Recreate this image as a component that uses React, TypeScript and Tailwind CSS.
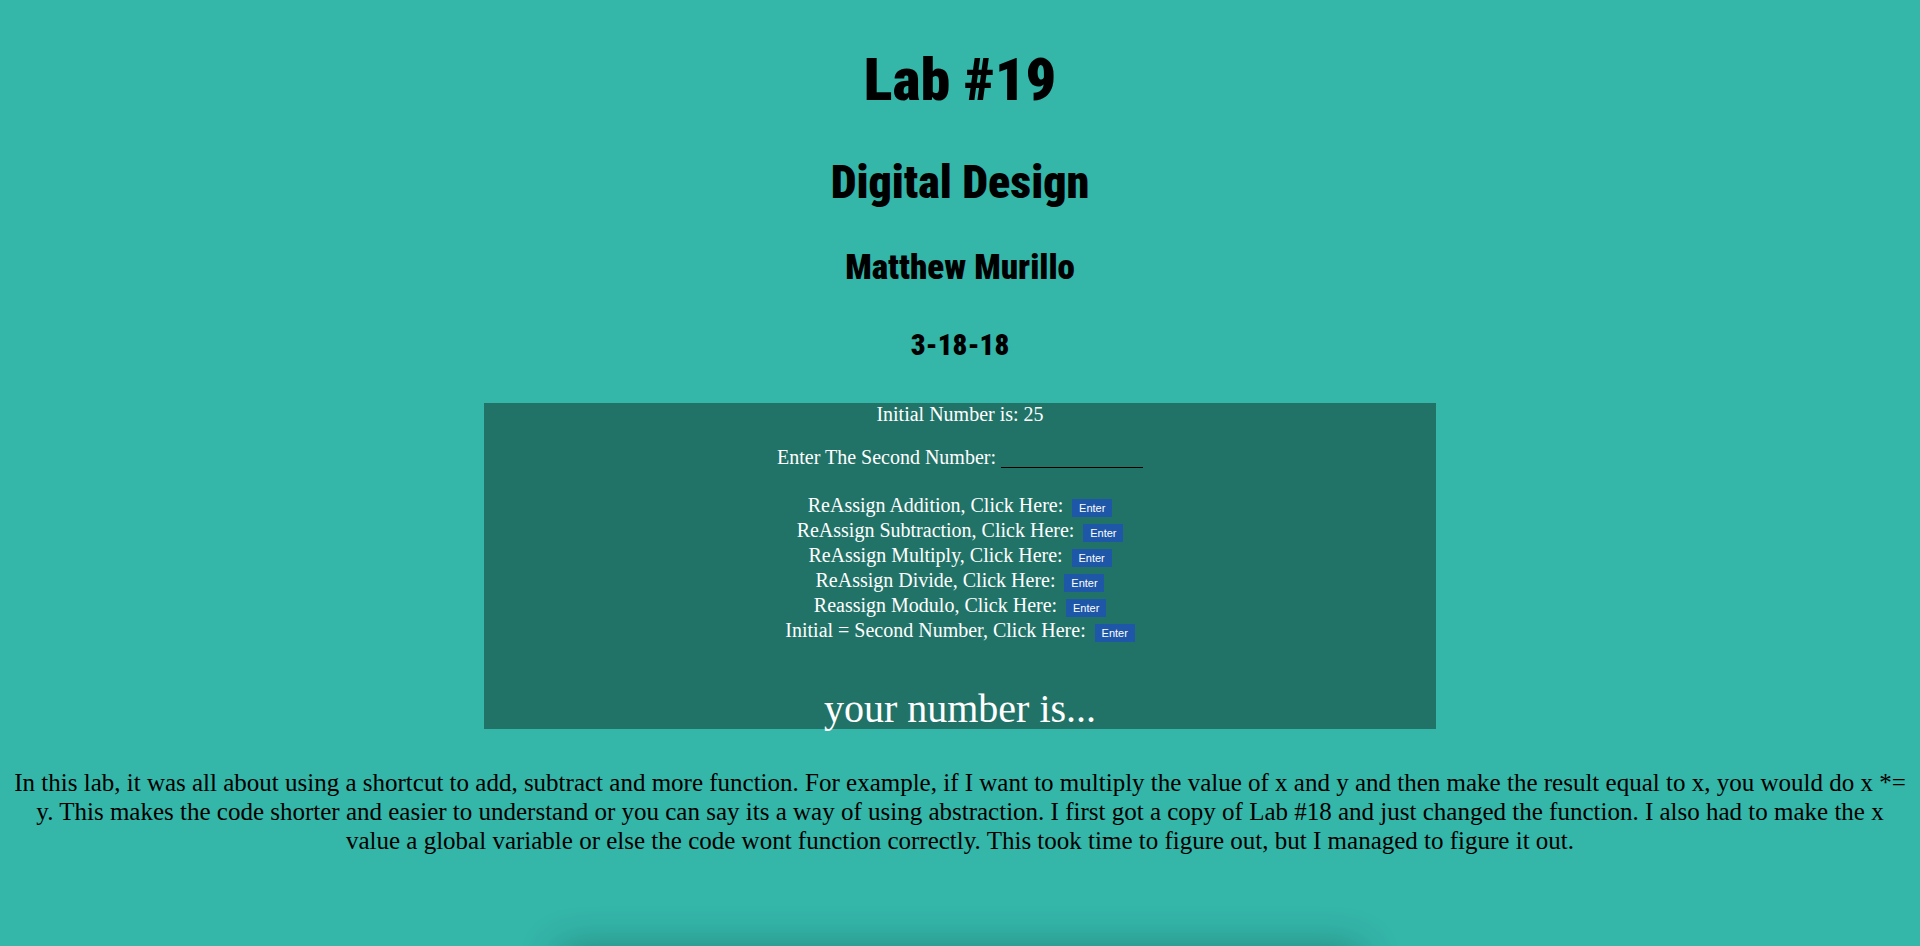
import React from 'react';

const operations = [
    'ReAssign Addition, Click Here:',
    'ReAssign Subtraction, Click Here:',
    'ReAssign Multiply, Click Here:',
    'ReAssign Divide, Click Here:',
    'Reassign Modulo, Click Here:',
    'Initial = Second Number, Click Here:',
];

const EnterButton: React.FC = () => (
    <button
        type="button"
        className="ml-1 inline-block h-[18px] w-[40px] bg-[#1e56a8] p-0 text-center align-baseline font-['Liberation_Sans','Arial',sans-serif] text-[11px] leading-[18px] text-white"
    >
        Enter
    </button>
);

export default function App() {
    return (
        <div className="h-[946px] overflow-hidden bg-[#34b6a9] font-['Liberation_Serif','Times_New_Roman',serif] text-black">
            <header className="flex flex-col items-center pt-[50px] font-['Impact','Liberation_Sans_Narrow','Roboto_Condensed','DejaVu_Sans_Condensed','DejaVu_Sans',sans-serif] font-black font-stretch-condensed">
                <h1 className="text-[60px] leading-none">Lab #19</h1>
                <h2 className="mt-[49px] text-[46px] leading-none">Digital Design</h2>
                <h3 className="mt-[45px] text-[35px] leading-none">Matthew Murillo</h3>
                <h4 className="mt-[46px] text-[29px] leading-none">3-18-18</h4>
            </header>

            <section className="mx-auto mt-[43px] h-[326px] w-[952px] bg-[#217368] text-center text-[20px] text-white">
                <p className="leading-[23px]">Initial Number is: 25</p>
                <p className="mt-[20px] leading-[23px]">
                    Enter The Second Number: <input
                        type="text"
                        className="h-[20px] w-[142px] border-0 border-b border-black bg-transparent p-0 align-text-bottom outline-none"
                    />
                </p>
                <div className="mt-[24px] leading-[25px]">
                    {operations.map(op => (
                        <div key={op}>
                            {op} <EnterButton />
                        </div>
                    ))}
                </div>
                <p className="mt-[46px] text-[40px] leading-[40px]">your number is...</p>
            </section>

            <p className="mt-[39px] px-2 text-center text-[25px] leading-[29px]">
                In this lab, it was all about using a shortcut to add, subtract and more function. For example, if I want to multiply the value of x and y and then make the result equal to x, you would do x *=<br />
                y. This makes the code shorter and easier to understand or you can say its a way of using abstraction. I first got a copy of Lab #18 and just changed the function. I also had to make the x<br />
                value a global variable or else the code wont function correctly. This took time to figure out, but I managed to figure it out.
            </p>

            <div className="mx-auto mt-[94px] h-[80px] w-[800px] shadow-[0_0_40px_rgba(0,0,0,0.3)]" />
        </div>
    );
}
